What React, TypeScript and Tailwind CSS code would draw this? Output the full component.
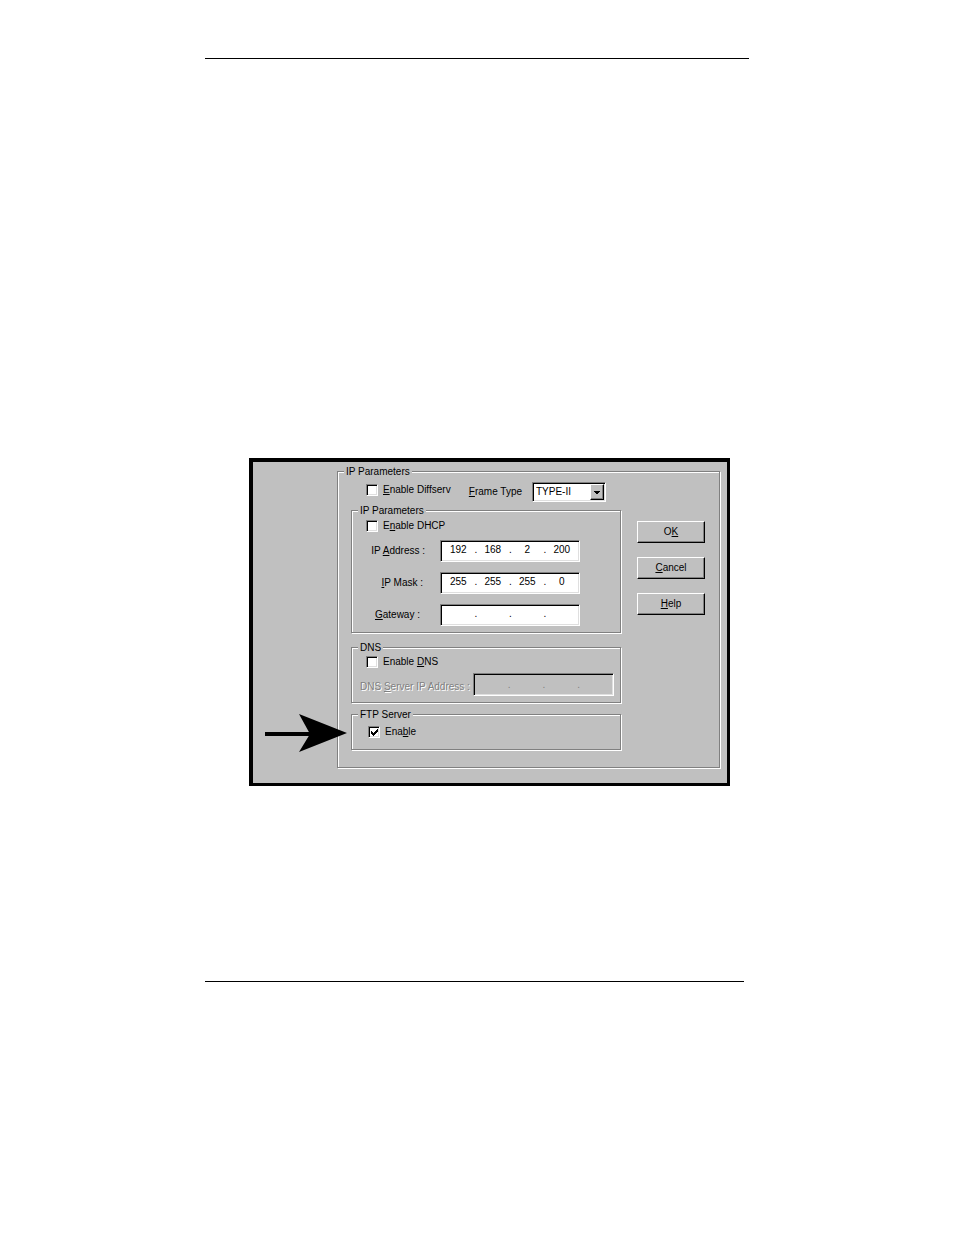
import React, { useState } from 'react';
import clsx from 'clsx';

// Win95 style 3D edges
const SUNKEN = 'border border-t-[#808080] border-l-[#808080] border-r-white border-b-white shadow-[inset_1px_1px_0_#000,inset_-1px_-1px_0_#dfdfdf]';

const Group: React.FC<{ title: string; className?: string; children: React.ReactNode }> = ({ title, className, children }) => (
  <fieldset className={clsx('min-w-0 border border-[#808080] shadow-[inset_1px_1px_0_#fff,1px_1px_0_#fff]', className)}>
    <legend className="ml-1.5 h-3.5 bg-[#c0c0c0] px-0.5 leading-4">{title}</legend>
    {children}
  </fieldset>
);

interface CheckProps {
  id: string;
  checked: boolean;
  onChange: (value: boolean) => void;
  className?: string;
  children: React.ReactNode;
}

const Check: React.FC<CheckProps> = ({ id, checked, onChange, className, children }) => (
  <div className={clsx('flex h-3.5 items-center gap-[5px]', className)}>
    <span className="relative block size-3 shrink-0">
      <input
        id={id}
        type="checkbox"
        checked={checked}
        onChange={(e) => onChange(e.target.checked)}
        className={clsx('block size-3 appearance-none bg-white', SUNKEN)}
      />
      {checked && (
        <svg viewBox="0 0 12 12" className="pointer-events-none absolute inset-0 size-3" shapeRendering="crispEdges">
          <path d="M3 5h1v1h1v1h1v-1h1v-1h1v-1h1v-1h1v3h-1v1h-1v1h-1v1h-1v1h-1v-1h-1v-1h-1z" fill="#000" />
        </svg>
      )}
    </span>
    <label htmlFor={id} className="whitespace-nowrap">{children}</label>
  </div>
);

interface IpFieldProps {
  id: string;
  name: string;
  value: string[];
  onChange?: (value: string[]) => void;
  disabled?: boolean;
}

const IpField: React.FC<IpFieldProps> = ({ id, name, value, onChange, disabled }) => (
  <div className={clsx('flex min-w-0 flex-1 items-center px-px', SUNKEN, disabled ? 'h-[23px] bg-[#c0c0c0] text-[#808080]' : 'h-[22px] bg-white pb-0.5')}>
    {value.map((part, i) => (
      <React.Fragment key={i}>
        {i > 0 && <span className="w-0.5 text-center">.</span>}
        <input
          id={i === 0 ? id : undefined}
          aria-label={`${name} ${i + 1}`}
          type="text"
          maxLength={3}
          value={part}
          disabled={disabled}
          onChange={(e) => onChange?.(value.map((p, n) => (n === i ? e.target.value : p)))}
          className="w-0 min-w-0 flex-1 bg-transparent text-center outline-none"
        />
      </React.Fragment>
    ))}
  </div>
);

const PushButton: React.FC<{ children: React.ReactNode }> = ({ children }) => (
  <button
    type="button"
    className="h-[22px] w-full border border-t-white border-l-white border-r-black border-b-black shadow-[inset_-1px_-1px_0_#808080]"
  >
    {children}
  </button>
);

const App: React.FC = () => {
  const [diffserv, setDiffserv] = useState(false);
  const [dhcp, setDhcp] = useState(false);
  const [dns, setDns] = useState(false);
  const [ftp, setFtp] = useState(true);
  const [address, setAddress] = useState(['192', '168', '2', '200']);
  const [mask, setMask] = useState(['255', '255', '255', '0']);
  const [gateway, setGateway] = useState(['', '', '', '']);

  return (
    <main className="mx-auto min-h-screen w-full max-w-[544px] bg-white pt-[58px]">
      <hr className="border-black" />

      <div className="relative mt-[399px] mr-[19px] ml-11 border-t-4 border-r-3 border-b-3 border-l-4 border-black bg-[#c0c0c0] pt-0.5 pr-[7px] pb-[15px] pl-[84px] font-['Liberation_Sans',Arial,sans-serif] text-[10px] leading-3.5 text-black">
        <Group title="IP Parameters" className="pb-[17px]">
          <div className="flex gap-4 pt-1 pr-3.5 pl-[13px]">
            <div className="min-w-0 flex-1">
              <div className="flex h-5 pr-[15px] pl-[15px]">
                <Check id="diffserv" checked={diffserv} onChange={setDiffserv} className="mt-px">
                  <u>E</u>nable Diffserv
                </Check>
                <label htmlFor="frame" className="ml-auto pr-2.5 leading-5 whitespace-nowrap"><u>F</u>rame Type</label>
                <div className="relative w-[74px]">
                  <select id="frame" defaultValue="TYPE-II" className={clsx('block h-5 w-full appearance-none bg-white pl-[3px] leading-4', SUNKEN)}>
                    <option>TYPE-II</option>
                    <option>TYPE-SNAP</option>
                  </select>
                  <span className="pointer-events-none absolute top-0.5 right-0.5 flex h-4 w-3.5 items-center justify-center border border-t-white border-l-white border-r-black border-b-black bg-[#c0c0c0] shadow-[inset_-1px_-1px_0_#808080]">
                    <svg viewBox="0 0 6 3" className="h-[3px] w-1.5" shapeRendering="crispEdges">
                      <path d="M0 0h6v1h-1v1h-1v1h-2v-1h-1v-1h-1z" fill="#000" />
                    </svg>
                  </span>
                </div>
              </div>

              <Group title="IP Parameters" className="mt-px pb-1.5">
                <Check id="dhcp" checked={dhcp} onChange={setDhcp} className="mt-0.5 ml-3.5">
                  E<u>n</u>able DHCP
                </Check>
                <div className="mt-[7px] flex flex-col gap-2.5 pr-10">
                  <div className="flex items-center">
                    <label htmlFor="address" className="w-[88px] pr-[15px] text-right">IP <u>A</u>ddress :</label>
                    <IpField id="address" name="IP Address" value={address} onChange={setAddress} />
                  </div>
                  <div className="flex items-center">
                    <label htmlFor="mask" className="w-[88px] pr-[17px] text-right"><u>I</u>P Mask :</label>
                    <IpField id="mask" name="IP Mask" value={mask} onChange={setMask} />
                  </div>
                  <div className="flex items-center">
                    <label htmlFor="gateway" className="w-[88px] pr-5 text-right"><u>G</u>ateway :</label>
                    <IpField id="gateway" name="Gateway" value={gateway} onChange={setGateway} />
                  </div>
                </div>
              </Group>

              <Group title="DNS" className="mt-[7px] pb-1.5">
                <Check id="dns" checked={dns} onChange={setDns} className="mt-px ml-3.5">
                  Enable <u>D</u>NS
                </Check>
                <div className="mt-1 flex items-center pr-1.5">
                  <label htmlFor="dns-ip" className="w-[121px] pt-1 pl-2 whitespace-nowrap text-[#808080] [text-shadow:1px_1px_0_#fff]">DNS <u>S</u>erver IP Address :</label>
                  <IpField id="dns-ip" name="DNS Server IP Address" value={['', '', '', '']} disabled />
                </div>
              </Group>

              <Group title="FTP Server" className="mt-1 pb-2.5">
                <Check id="ftp" checked={ftp} onChange={setFtp} className="mt-1 ml-4">
                  Ena<u>b</u>le
                </Check>
              </Group>
            </div>

            <div className="flex w-[68px] flex-col gap-3.5 pt-[39px]">
              <PushButton>O<u>K</u></PushButton>
              <PushButton><u>C</u>ancel</PushButton>
              <PushButton><u>H</u>elp</PushButton>
            </div>
          </div>
        </Group>

        {/* Arrow pointing at the FTP option */}
        <svg viewBox="0 0 82 38" className="absolute bottom-[31px] left-3 h-[38px] w-[82px]">
          <path d="M0 18H46V22H0Z M34 0L82 19L34 38L45 20Z" fill="#000" />
        </svg>
      </div>

      <hr className="mt-[195px] mr-[5px] border-black" />
    </main>
  );
};

export default App;
